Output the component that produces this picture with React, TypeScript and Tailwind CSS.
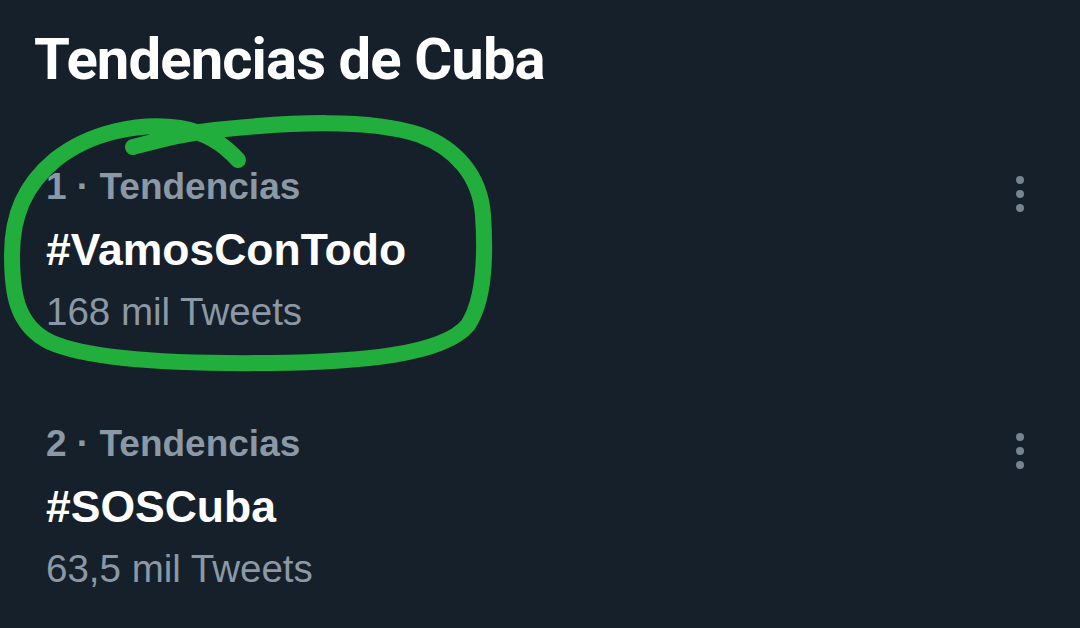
import React from 'react';

interface Trend {
  rank: number;
  tag: string;
  count: string;
}

const TRENDS: Trend[] = [
  { rank: 1, tag: '#VamosConTodo', count: '168 mil Tweets' },
  { rank: 2, tag: '#SOSCuba', count: '63,5 mil Tweets' },
];

const MoreIcon = () => (
  <div className="flex flex-col items-center gap-[6px] pt-[20px]">
    <span className="block w-[8px] h-[8px] rounded-full bg-[#76848f]" />
    <span className="block w-[8px] h-[8px] rounded-full bg-[#76848f]" />
    <span className="block w-[8px] h-[8px] rounded-full bg-[#76848f]" />
  </div>
);

// hand-drawn green loop around the first trend
const Scribble = () => (
  <svg
    className="absolute left-0 top-0 pointer-events-none"
    width="500"
    height="380"
    viewBox="0 0 500 380"
    fill="none"
  >
    <path
      d="M133,147 C160,140 185,133 215,130 C290,122 370,118 420,135 C455,148 480,175 483,215 C486,260 484,300 468,325 C443,355 360,362 270,363 C180,364 90,360 50,342 C15,325 12,290 12,255 C12,215 25,185 55,160 C90,132 140,122 180,128 C205,132 225,145 238,160"
      stroke="#22ae3c"
      strokeWidth="16"
      strokeLinecap="round"
      strokeLinejoin="round"
    />
  </svg>
);

const TrendRow: React.FC<{ trend: Trend }> = ({ trend }) => (
  <div className="flex justify-between pl-[46px] pr-[56px]">
    <div>
      <div className="text-[37px] leading-[62px] font-bold text-[#8b98a5]">
        {trend.rank} · Tendencias
      </div>
      <div className="text-[44.5px] leading-[64px] font-bold text-white">{trend.tag}</div>
      <div className="text-[38.5px] leading-[60px] text-[#8b98a5]">{trend.count}</div>
    </div>
    <MoreIcon />
  </div>
);

export default function App() {
  return (
    <div
      className="relative w-[1080px] h-[628px] overflow-hidden bg-[#16202a]"
      style={{ fontFamily: '"Liberation Sans", Arial, sans-serif' }}
    >
      <h1
        className="pl-[34px] pt-[19px] text-[58px] leading-[80px] font-bold tracking-[-0.9px] text-white"
        style={{ fontFamily: 'Roboto, "Noto Sans", sans-serif' }}
      >
        Tendencias de Cuba
      </h1>
      <div className="flex flex-col gap-[71px] mt-[57px]">
        {TRENDS.map((t) => (
          <TrendRow key={t.rank} trend={t} />
        ))}
      </div>
      <Scribble />
    </div>
  );
}
